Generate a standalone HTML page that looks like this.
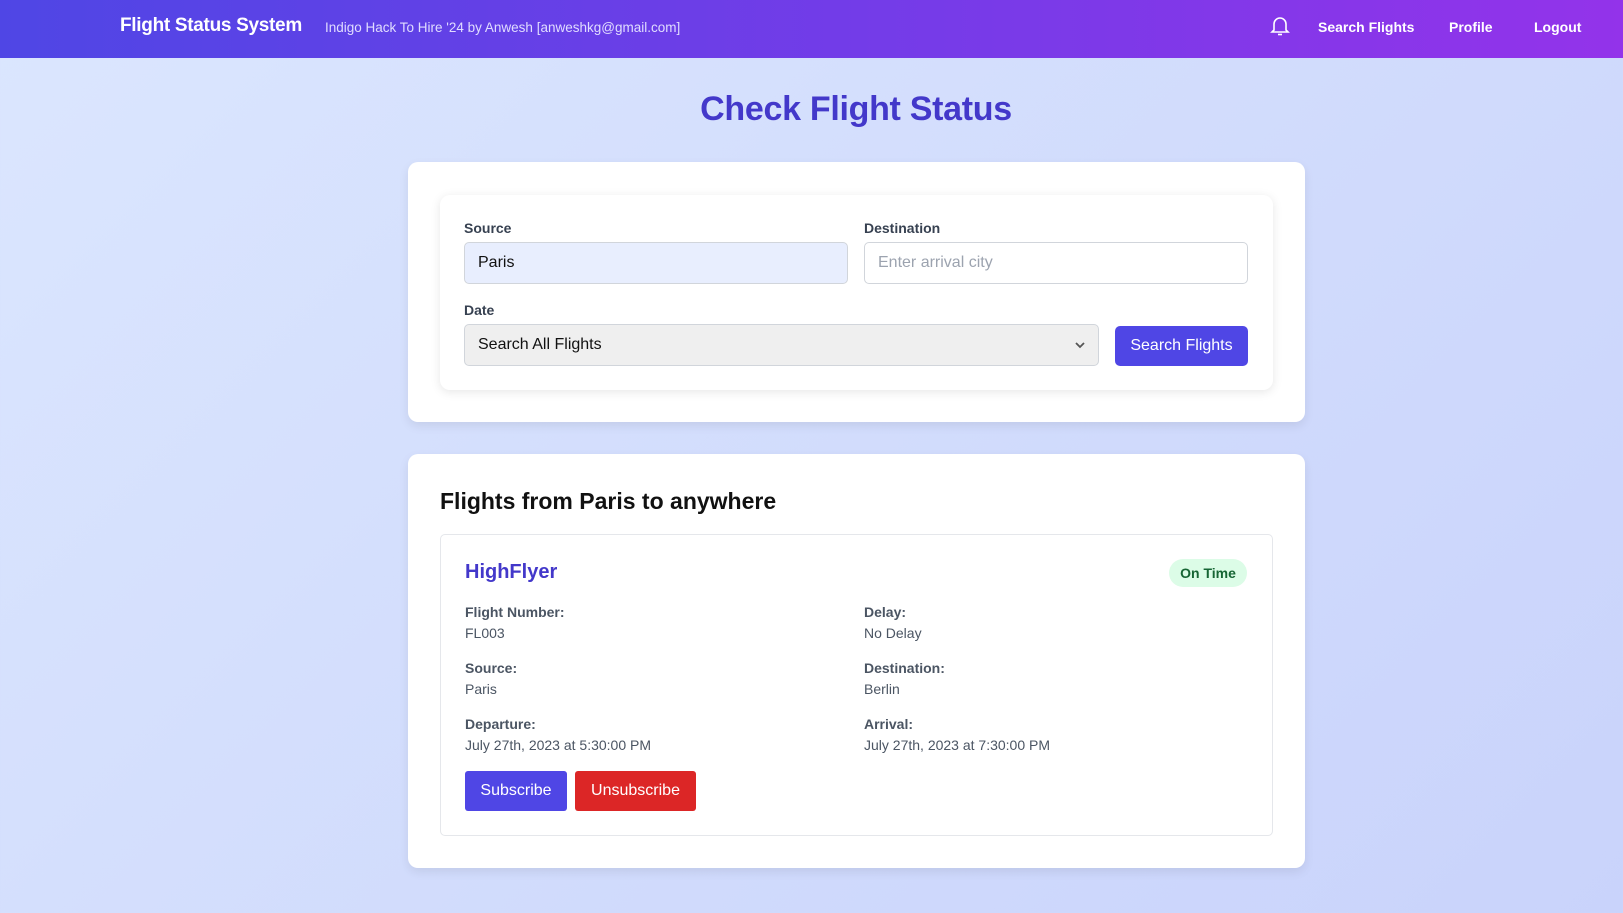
<!DOCTYPE html>
<html><head><meta charset="utf-8"><style>
*{box-sizing:border-box;margin:0;padding:0}
body{width:1623px;height:913px;overflow:hidden;font-family:"Liberation Sans",sans-serif;background:linear-gradient(135deg,#dbe6fe 0%,#c9d3fb 100%);position:relative;color:#111}
.a{position:absolute}
nav{position:absolute;left:0;top:0;width:1623px;height:58px;background:linear-gradient(90deg,#4f46e5,#9333ea)}
.nl{color:#fff;font-weight:bold;font-size:14px;top:19px}
.card{background:#fff;border-radius:10px;box-shadow:0 4px 10px rgba(0,0,0,.08)}
.lbl{font-size:14px;font-weight:bold;color:#374151}
.inp{border:1px solid #d1d5db;border-radius:5px;font-size:16px;padding:0 13px;display:flex;align-items:center}
.k{font-size:14px;font-weight:bold;color:#4b5563}
.v{font-size:14px;color:#4b5563}
.btn{color:#fff;font-size:16px;border-radius:3px;display:flex;align-items:center;justify-content:center}
</style></head><body>
<nav>
<div class="a" style="left:120px;top:15px;color:#fff;font-weight:bold;font-size:19px;letter-spacing:-0.3px">Flight Status System</div>
<div class="a" style="left:325px;top:20px;color:#e0dcff;font-size:13.5px">Indigo Hack To Hire '24 by Anwesh [anweshkg@gmail.com]</div>
<svg class="a" style="left:1270px;top:15px" width="20" height="22" viewBox="0 0 20 22" fill="none" stroke="#fff" stroke-width="1.6"><path d="M4 15V9a6 6 0 0 1 12 0v6l2 2H2z"/><path d="M8 19.5h4"/></svg>
<div class="a nl" style="left:1318px">Search Flights</div>
<div class="a nl" style="left:1449px">Profile</div>
<div class="a nl" style="left:1534px">Logout</div>
</nav>
<div class="a" style="left:0;width:1712px;top:90px;text-align:center;font-size:34px;font-weight:bold;color:#4338ca;letter-spacing:-0.3px">Check Flight Status</div>

<div class="a card" style="left:408px;top:162px;width:897px;height:260px"></div>
<div class="a card" style="left:440px;top:195px;width:833px;height:195px;box-shadow:0 2px 10px rgba(0,0,0,.1)"></div>
<div class="a lbl" style="left:464px;top:220px">Source</div>
<div class="a inp" style="left:464px;top:242px;width:384px;height:42px;background:#e8eefe">Paris</div>
<div class="a lbl" style="left:864px;top:220px">Destination</div>
<div class="a inp" style="left:864px;top:242px;width:384px;height:42px;color:#9ca3af;background:#fff">Enter arrival city</div>
<div class="a lbl" style="left:464px;top:302px">Date</div>
<div class="a inp" style="left:464px;top:324px;width:635px;height:42px;background:#efefef">Search All Flights</div>
<svg class="a" style="left:1074px;top:341px" width="12" height="8" viewBox="0 0 12 8"><path d="M2 2l4 4 4-4" fill="none" stroke="#555" stroke-width="1.8"/></svg>
<div class="a btn" style="left:1115px;top:326px;width:133px;height:40px;background:#4f46e5;border-radius:5px">Search Flights</div>

<div class="a card" style="left:408px;top:454px;width:897px;height:414px"></div>
<div class="a" style="left:440px;top:488px;font-size:23px;font-weight:bold">Flights from Paris to anywhere</div>
<div class="a" style="left:440px;top:534px;width:833px;height:302px;border:1px solid #e5e7eb;border-radius:5px"></div>
<div class="a" style="left:465px;top:561px;font-size:20px;font-weight:bold;color:#4338ca">HighFlyer</div>
<div class="a" style="left:1169px;top:559px;width:78px;height:28px;border-radius:14px;background:#dcfce7;color:#166534;font-size:14px;font-weight:bold;display:flex;align-items:center;justify-content:center">On Time</div>
<div class="a k" style="left:465px;top:604px">Flight Number:</div><div class="a v" style="left:465px;top:625px">FL003</div>
<div class="a k" style="left:864px;top:604px">Delay:</div><div class="a v" style="left:864px;top:625px">No Delay</div>
<div class="a k" style="left:465px;top:660px">Source:</div><div class="a v" style="left:465px;top:681px">Paris</div>
<div class="a k" style="left:864px;top:660px">Destination:</div><div class="a v" style="left:864px;top:681px">Berlin</div>
<div class="a k" style="left:465px;top:716px">Departure:</div><div class="a v" style="left:465px;top:737px">July 27th, 2023 at 5:30:00 PM</div>
<div class="a k" style="left:864px;top:716px">Arrival:</div><div class="a v" style="left:864px;top:737px">July 27th, 2023 at 7:30:00 PM</div>
<div class="a btn" style="left:465px;top:771px;width:102px;height:40px;background:#4f46e5">Subscribe</div>
<div class="a btn" style="left:575px;top:771px;width:121px;height:40px;background:#dc2626">Unsubscribe</div>
</body></html>
